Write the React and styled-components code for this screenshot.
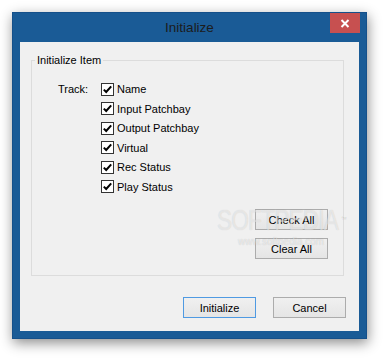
import React from "react";
import styled, { createGlobalStyle } from "styled-components";

const Global = createGlobalStyle`
  html, body { margin: 0; padding: 0; background: #ffffff; }
  body { font-family: "Liberation Sans", Arial, sans-serif; }
`;

const Page = styled.div`
  width: 387px;
  height: 359px;
  box-sizing: border-box;
  padding: 12px 0 0 12px;
  background: #ffffff;
  overflow: hidden;
`;

const Window = styled.div`
  width: 355px;
  height: 327px;
  box-sizing: border-box;
  background: #1a5b96;
  border: 1px solid #15508a;
  padding: 0 7px 7px;
  display: flex;
  flex-direction: column;
  box-shadow: 1px 4px 12px rgba(0, 0, 0, 0.45);
`;

const TitleBar = styled.div`
  height: 29px;
  margin: 0 -7px;
  display: grid;
  grid-template-columns: 1fr auto 1fr;
  align-items: center;
`;

const Title = styled.div`
  grid-column: 2;
  font-family: "Liberation Sans", Arial, sans-serif;
  font-size: 13.5px;
  color: #1c1c1c;
  line-height: 16px;
  padding-top: 1px;
`;

const CloseButton = styled.div`
  grid-column: 3;
  justify-self: end;
  align-self: start;
  width: 30px;
  height: 20px;
  margin-right: 6px;
  background: #c75050;
  display: flex;
  align-items: center;
  justify-content: center;
`;

const Client = styled.div`
  flex: 1;
  background: #f0f0f0;
  position: relative;
  display: flex;
  flex-direction: column;
  font-family: "Liberation Sans", Arial, sans-serif;
  font-size: 11px;
  color: #000;
`;

const Group = styled.fieldset`
  margin: 11px 15px 0 11px;
  padding: 0;
  border: 1px solid #dcdcdc;
  min-width: 0;
`;

const Legend = styled.legend`
  margin-left: 3px;
  padding: 0 2px;
  font-size: 11px;
  line-height: 14px;
`;

const GroupBody = styled.div`
  padding: 12.5px 15px 16px 26px;
  display: flex;
  flex-direction: column;
`;

const TrackGrid = styled.div`
  display: grid;
  grid-template-columns: 43px 1fr;
`;

const FieldLabel = styled.div`
  height: 19.5px;
  line-height: 19.5px;
`;

const OptionList = styled.div`
  display: flex;
  flex-direction: column;
`;

const Row = styled.label`
  height: 19.5px;
  display: flex;
  align-items: center;
  gap: 3px;
`;

const Box = styled.span`
  width: 13px;
  height: 13px;
  box-sizing: border-box;
  border: 1px solid #333333;
  background: #ffffff;
  display: flex;
  align-items: center;
  justify-content: center;
`;

const SideButtons = styled.div`
  margin-top: 12.5px;
  display: flex;
  flex-direction: column;
  align-items: flex-end;
  gap: 8px;
`;

const Button = styled.button`
  width: 73px;
  height: 21px;
  box-sizing: border-box;
  padding: 0;
  border: 1px solid ${(p) => (p.$default ? "#4f9ae2" : "#acacac")};
  background: linear-gradient(#f0f0f0, #e5e5e5);
  font-family: "Liberation Sans", Arial, sans-serif;
  font-size: 11px;
  color: #000;
`;

const Footer = styled.div`
  margin-top: 21px;
  padding-right: 13px;
  display: flex;
  justify-content: flex-end;
  gap: 17px;
`;

const Watermark = styled.div`
  position: absolute;
  left: 197px;
  top: 163px;
  pointer-events: none;
  display: flex;
  flex-direction: column;
  align-items: flex-start;
  font-family: "Liberation Sans", Arial, sans-serif;
`;

const MarkBig = styled.div`
  font-size: 29px;
  line-height: 30px;
  letter-spacing: -1px;
  transform: scaleX(0.78);
  transform-origin: left top;
  white-space: nowrap;
  color: rgba(255, 255, 255, 0.5);
  text-shadow: 0 0 1px rgba(0, 0, 0, 0.16);
`;

const Tm = styled.span`
  font-size: 8px;
  vertical-align: top;
  margin-left: 3px;
  color: rgba(0, 0, 0, 0.15);
  text-shadow: none;
`;

const MarkSmall = styled.div`
  margin-top: 1px;
  margin-left: 21px;
  font-size: 10px;
  white-space: nowrap;
  color: rgba(255, 255, 255, 0.55);
  text-shadow: 0 0 1px rgba(0, 0, 0, 0.2);
`;

const Check = () => (
  <Box>
    <svg width="11" height="11" viewBox="0 0 11 11">
      <path d="M1.8 5.6 L4.2 8 L9.2 2.4" fill="none" stroke="#000" strokeWidth="2" />
    </svg>
  </Box>
);

const items = ["Name", "Input Patchbay", "Output Patchbay", "Virtual", "Rec Status", "Play Status"];

export default function App() {
  return (
    <>
      <Global />
      <Page>
        <Window>
          <TitleBar>
            <Title>Initialize</Title>
            <CloseButton>
              <svg width="10" height="9" viewBox="0 0 10 9">
                <path d="M1.5 1 L8.5 8 M8.5 1 L1.5 8" stroke="#fff" strokeWidth="2" />
              </svg>
            </CloseButton>
          </TitleBar>
          <Client>
            <Group>
              <Legend>Initialize Item</Legend>
              <GroupBody>
                <TrackGrid>
                  <FieldLabel>Track:</FieldLabel>
                  <OptionList>
                    {items.map((t) => (
                      <Row key={t}>
                        <Check />
                        {t}
                      </Row>
                    ))}
                  </OptionList>
                </TrackGrid>
                <SideButtons>
                  <Button>Check All</Button>
                  <Button>Clear All</Button>
                </SideButtons>
              </GroupBody>
            </Group>
            <Footer>
              <Button $default>Initialize</Button>
              <Button>Cancel</Button>
            </Footer>
            <Watermark>
              <MarkBig>
                SOFTPEDIA<Tm>™</Tm>
              </MarkBig>
              <MarkSmall>www.softpedia.com</MarkSmall>
            </Watermark>
          </Client>
        </Window>
      </Page>
    </>
  );
}
